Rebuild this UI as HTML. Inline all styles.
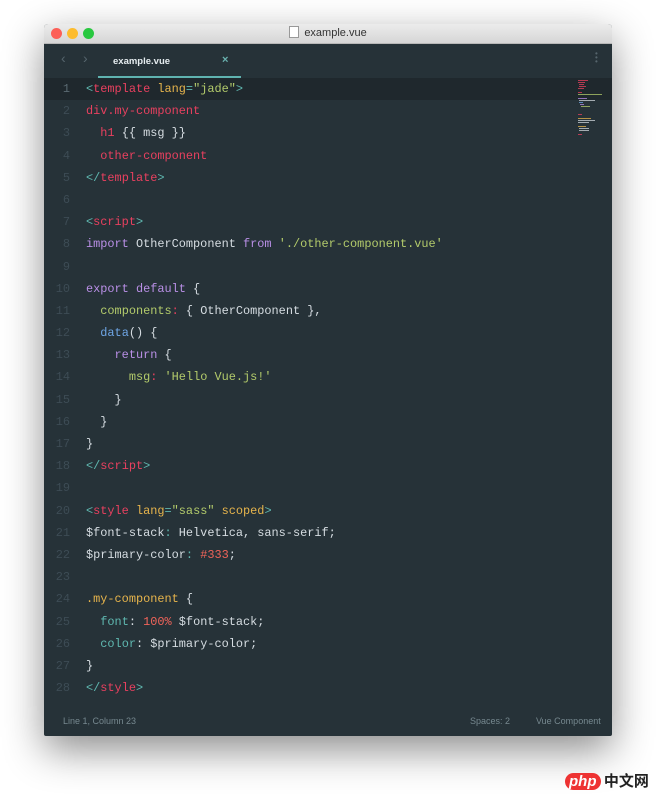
<!DOCTYPE html>
<html><head><meta charset="utf-8"><style>
body{margin:0;width:657px;height:800px;background:#fff;position:relative;overflow:hidden;font-family:"Liberation Sans",sans-serif}
.win{position:absolute;left:44px;top:24px;width:568px;height:712px;background:#263238;box-shadow:0 14px 40px rgba(0,0,0,.45);border-radius:4px 4px 2px 2px;overflow:hidden}
.title{height:19px;background:linear-gradient(#ececec,#d6d6d6);border-bottom:1px solid #b8b8b8;position:relative;font-size:11px;color:#333;text-align:center;line-height:19px}
.dot{position:absolute;top:4px;width:11px;height:11px;border-radius:50%}
.tabs{height:34px;position:relative;background:#263238}
.tab{position:absolute;left:54px;top:0;width:143px;height:32px;border-bottom:2px solid #5fb3b0;color:#e6edf0;font-size:9.5px;font-weight:bold}
.code{position:absolute;top:54px;left:0;right:0;font-family:"Liberation Mono",monospace;font-size:11.9px}
.l{height:22.2px;line-height:22.2px;position:relative;white-space:pre;color:#d6dde2}
.l.cur{background:#1f282d}
.n{position:absolute;left:0;width:26px;text-align:right;color:#3d4c55}
.c{position:absolute;left:42px}
.r{color:#e8405f}.t{color:#5fb8b0}.y{color:#e6b44c}.g{color:#b3cb6b}.p{color:#b98fe6}.b{color:#6fa6e6}.o{color:#f0645a}
.status{position:absolute;bottom:0;left:0;right:0;height:30px;color:#76888f;font-size:9px;line-height:30px}
.mm{position:absolute;height:1px;opacity:.75}
</style></head><body>
<div class="win">
<div class="title">
<div class="dot" style="left:7px;background:#fc5f57"></div>
<div class="dot" style="left:23px;background:#fdbc2e"></div>
<div class="dot" style="left:39px;background:#29c840"></div>
<span style="display:inline-block;width:8px;height:10px;border:1px solid #999;background:#fff;vertical-align:-2px;margin-right:5px"></span>example.vue
</div>
<div class="tabs">
<span style="position:absolute;left:17px;top:6px;color:#56656d;font-size:14px">&lsaquo;</span>
<span style="position:absolute;left:39px;top:6px;color:#56656d;font-size:14px">&rsaquo;</span>
<div class="tab"><span style="position:absolute;left:15px;top:12px">example.vue</span><span style="position:absolute;left:124px;top:10px;color:#6ab3b0;font-size:11px">×</span></div>
<div style="position:absolute;left:551px;top:8px;width:3px;color:#56656d;font-size:8px;line-height:4px">•<br>•<br>•</div>
</div>
<div class="code">
<div class="l cur"><span class="n" style="color:#5a6a72">1</span><span class="c"><span class="t">&lt;</span><span class="r">template</span> <span class="y">lang</span><span class="t">=</span><span class="g">"jade"</span><span class="t">&gt;</span></span></div>
<div class="l"><span class="n">2</span><span class="c"><span class="r">div.my-component</span></span></div>
<div class="l"><span class="n">3</span><span class="c">  <span class="r">h1</span> {{ msg }}</span></div>
<div class="l"><span class="n">4</span><span class="c">  <span class="r">other-component</span></span></div>
<div class="l"><span class="n">5</span><span class="c"><span class="t">&lt;/</span><span class="r">template</span><span class="t">&gt;</span></span></div>
<div class="l"><span class="n">6</span></div>
<div class="l"><span class="n">7</span><span class="c"><span class="t">&lt;</span><span class="r">script</span><span class="t">&gt;</span></span></div>
<div class="l"><span class="n">8</span><span class="c"><span class="p">import</span> OtherComponent <span class="p">from</span> <span class="g">'./other-component.vue'</span></span></div>
<div class="l"><span class="n">9</span></div>
<div class="l"><span class="n">10</span><span class="c"><span class="p">export default</span> {</span></div>
<div class="l"><span class="n">11</span><span class="c">  <span class="g">components</span><span class="r">:</span> { OtherComponent },</span></div>
<div class="l"><span class="n">12</span><span class="c">  <span class="b">data</span>() {</span></div>
<div class="l"><span class="n">13</span><span class="c">    <span class="p">return</span> {</span></div>
<div class="l"><span class="n">14</span><span class="c">      <span class="g">msg</span><span class="r">:</span> <span class="g">'Hello Vue.js!'</span></span></div>
<div class="l"><span class="n">15</span><span class="c">    }</span></div>
<div class="l"><span class="n">16</span><span class="c">  }</span></div>
<div class="l"><span class="n">17</span><span class="c">}</span></div>
<div class="l"><span class="n">18</span><span class="c"><span class="t">&lt;/</span><span class="r">script</span><span class="t">&gt;</span></span></div>
<div class="l"><span class="n">19</span></div>
<div class="l"><span class="n">20</span><span class="c"><span class="t">&lt;</span><span class="r">style</span> <span class="y">lang</span><span class="t">=</span><span class="g">"sass"</span> <span class="y">scoped</span><span class="t">&gt;</span></span></div>
<div class="l"><span class="n">21</span><span class="c">$font-stack<span class="t">:</span> Helvetica, sans-serif;</span></div>
<div class="l"><span class="n">22</span><span class="c">$primary-color<span class="t">:</span> <span class="o">#333</span>;</span></div>
<div class="l"><span class="n">23</span></div>
<div class="l"><span class="n">24</span><span class="c"><span class="y">.my-component</span> {</span></div>
<div class="l"><span class="n">25</span><span class="c">  <span class="t">font</span>: <span class="o">100%</span> $font-stack;</span></div>
<div class="l"><span class="n">26</span><span class="c">  <span class="t">color</span>: $primary-color;</span></div>
<div class="l"><span class="n">27</span><span class="c">}</span></div>
<div class="l"><span class="n">28</span><span class="c"><span class="t">&lt;/</span><span class="r">style</span><span class="t">&gt;</span></span></div>
</div>
<div class="mm" style="left:534px;top:56px;width:10px;background:#e8405f"></div>
<div class="mm" style="left:534px;top:58px;width:7px;background:#e8405f"></div>
<div class="mm" style="left:535px;top:60px;width:5px;background:#e8405f"></div>
<div class="mm" style="left:535px;top:62px;width:7px;background:#e8405f"></div>
<div class="mm" style="left:534px;top:64px;width:6px;background:#e8405f"></div>
<div class="mm" style="left:534px;top:68px;width:4px;background:#e8405f"></div>
<div class="mm" style="left:534px;top:70px;width:24px;background:#b3cb6b"></div>
<div class="mm" style="left:534px;top:74px;width:9px;background:#b98fe6"></div>
<div class="mm" style="left:535px;top:76px;width:16px;background:#cfd6da"></div>
<div class="mm" style="left:535px;top:78px;width:4px;background:#6fa6e6"></div>
<div class="mm" style="left:536px;top:80px;width:4px;background:#b98fe6"></div>
<div class="mm" style="left:537px;top:82px;width:9px;background:#b3cb6b"></div>
<div class="mm" style="left:534px;top:90px;width:4px;background:#e8405f"></div>
<div class="mm" style="left:534px;top:94px;width:13px;background:#e6b44c"></div>
<div class="mm" style="left:534px;top:96px;width:17px;background:#cfd6da"></div>
<div class="mm" style="left:534px;top:98px;width:11px;background:#cfd6da"></div>
<div class="mm" style="left:534px;top:102px;width:8px;background:#e6b44c"></div>
<div class="mm" style="left:535px;top:104px;width:10px;background:#cfd6da"></div>
<div class="mm" style="left:535px;top:106px;width:10px;background:#cfd6da"></div>
<div class="mm" style="left:534px;top:110px;width:4px;background:#e8405f"></div>
<div class="status"><span style="position:absolute;left:19px">Line 1, Column 23</span><span style="position:absolute;left:426px">Spaces: 2</span><span style="position:absolute;left:492px">Vue Component</span></div>
</div>
<div style="position:absolute;left:565px;top:770px;font-size:15px;font-weight:bold"><span style="background:#e33;color:#fff;border-radius:10px;padding:0 4px;font-style:italic">php</span><span style="font-family:'Noto Sans CJK SC',sans-serif;color:#222"> 中文网</span></div>
</body></html>
